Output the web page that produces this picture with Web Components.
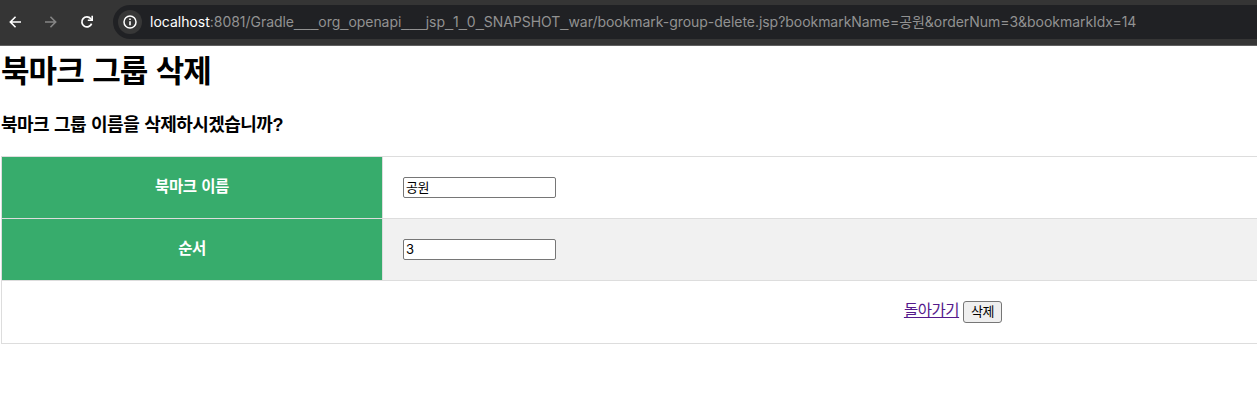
<!DOCTYPE html>
<html lang="ko">
<head>
<meta charset="utf-8">
<title>북마크 그룹 삭제</title>
<style>
html,body{margin:0;height:400px;overflow:hidden;background:#fff}
body{font-family:"Liberation Sans","Noto Sans CJK KR",sans-serif}
</style>
</head>
<body>
<browser-bar host="localhost" path=":8081/Gradle___org_openapi___jsp_1_0_SNAPSHOT_war/bookmark-group-delete.jsp?bookmarkName=공원&amp;orderNum=3&amp;bookmarkIdx=14"></browser-bar>
<delete-page></delete-page>
<script>
class BrowserBar extends HTMLElement{
  constructor(){super();this.attachShadow({mode:'open'}).innerHTML=`
<style>
:host{display:flex;box-sizing:border-box;height:46px;padding:5px 0 6px;background:#353535;border-bottom:1px solid #606060;overflow:hidden}
nav{display:flex;width:113px;flex:none;align-items:center;padding-left:7px;box-sizing:border-box;gap:20px}
svg{display:block;flex:none;fill:#fff}
.off{fill:#858585}
.field{display:flex;flex:1;align-items:center;background:#202124;border-radius:17px 0 0 17px;padding-left:5px;min-width:0}
.info{width:24px;height:24px;border-radius:50%;background:#373737;display:grid;place-items:center;flex:none}
.url{margin-left:8px;font:14px/20px Inter,"Noto Sans CJK KR",sans-serif;white-space:nowrap;color:#929292}
.host{color:#fff}
.path{letter-spacing:-.04px}
.u{font-family:"Liberation Sans",sans-serif;font-size:14.6px;line-height:1;letter-spacing:0}
</style>
<nav>
<svg width="16" height="16" viewBox="0 0 16 16"><path d="M8 2.2 9.1 3.3 5.2 7.2H14V8.8H5.2L9.1 12.7 8 13.8 2.2 8Z"/></svg>
<svg class="off" width="16" height="16" viewBox="0 0 16 16"><path d="M8 2.2 6.9 3.3 10.8 7.2H2V8.8H10.8L6.9 12.7 8 13.8 13.8 8Z"/></svg>
<svg width="16" height="16" viewBox="0 0 16 16"><path d="M12.6 9.6A5 5 0 1 1 11.8 4.8L13 6" fill="none" stroke="#fff" stroke-width="1.7"/><path d="M14 1.8V7H8.8V5.4H12.4V1.8Z"/></svg>
</nav>
<div class="field"><div class="info"><svg width="16" height="16" viewBox="0 0 16 16"><circle cx="8" cy="8" r="6" fill="none" stroke="#fff" stroke-width="1.5"/><path d="M7.2 7.2h1.6v4H7.2zM7.2 4.6h1.6v1.5H7.2z"/></svg></div>
<div class="url"><span class="host"></span><span class="path"></span></div></div>`}
  connectedCallback(){
    this.shadowRoot.querySelector('.host').textContent=this.getAttribute('host');
    const path=this.shadowRoot.querySelector('.path');
    // Underscore runs use a wider face so that they join into one line.
    path.replaceChildren(...this.getAttribute('path').split(/(_+)/).map(t=>{
      if(t[0]!=='_')return t;
      const s=document.createElement('span');s.className='u';s.textContent=t;return s;
    }));
  }
}
customElements.define('browser-bar',BrowserBar);

class FormRow extends HTMLElement{
  constructor(){super();this.attachShadow({mode:'open'}).innerHTML=`
<style>
:host{display:flex;height:62px;box-sizing:border-box;border-bottom:1px solid #ddd;background:var(--row,#fff)}
.label{width:380px;flex:none;background:#37ac6c;color:#fff;font-weight:700;font-size:15.5px;line-height:60px;letter-spacing:-.4px;word-spacing:.6px;text-align:center;border-right:1px solid #ddd}
.value{display:flex;align-items:center;padding-left:20px}
input{box-sizing:border-box;width:153px;height:21px;margin:0;padding:0 2px 2px;border:1px solid #767676;border-radius:2px;background:#fff;color:#000;font:13px Inter,"Noto Sans CJK KR",sans-serif;letter-spacing:-.4px;outline:0}
</style>
<div class="label"><slot></slot></div><div class="value"><input></div>`}
  connectedCallback(){this.shadowRoot.querySelector('input').value=this.getAttribute('value')}
}
customElements.define('form-row',FormRow);

class DeletePage extends HTMLElement{
  constructor(){super();this.attachShadow({mode:'open'}).innerHTML=`
<style>
:host{display:block;box-sizing:border-box;padding:2px 0 0 1px;overflow:hidden;color:#000}
h1{margin:0;font-size:31px;line-height:48px;height:62px;letter-spacing:-.95px;word-spacing:.8px;white-space:nowrap}
h3{margin:0;font-size:18px;line-height:30px;height:46px;letter-spacing:-.53px;word-spacing:.5px;white-space:nowrap}
.table{width:1904px;box-sizing:border-box;border:1px solid #ddd;border-bottom:0}
.even{--row:#f1f1f1}
.actions{display:flex;justify-content:center;height:63px;box-sizing:border-box;border-bottom:1px solid #ddd;padding-top:20px;gap:4px;align-items:flex-start}
a{color:#551a8b;font-size:15.5px;line-height:19px;letter-spacing:-.45px;text-decoration:underline}
button{box-sizing:border-box;width:39px;height:22px;padding:0;margin:0;border:1px solid #767676;border-radius:3px;background:#efefef;color:#000;font:13px/18px "Liberation Sans","Noto Sans CJK KR",sans-serif;letter-spacing:-.4px}
</style>
<h1>북마크 그룹 삭제</h1>
<h3>북마크 그룹 이름을 삭제하시겠습니까?</h3>
<div class="table">
<form-row value="공원">북마크 이름</form-row>
<form-row class="even" value="3">순서</form-row>
<div class="actions"><a href="#">돌아가기</a><button>삭제</button></div>
</div>`}
}
customElements.define('delete-page',DeletePage);
</script>
</body>
</html>
